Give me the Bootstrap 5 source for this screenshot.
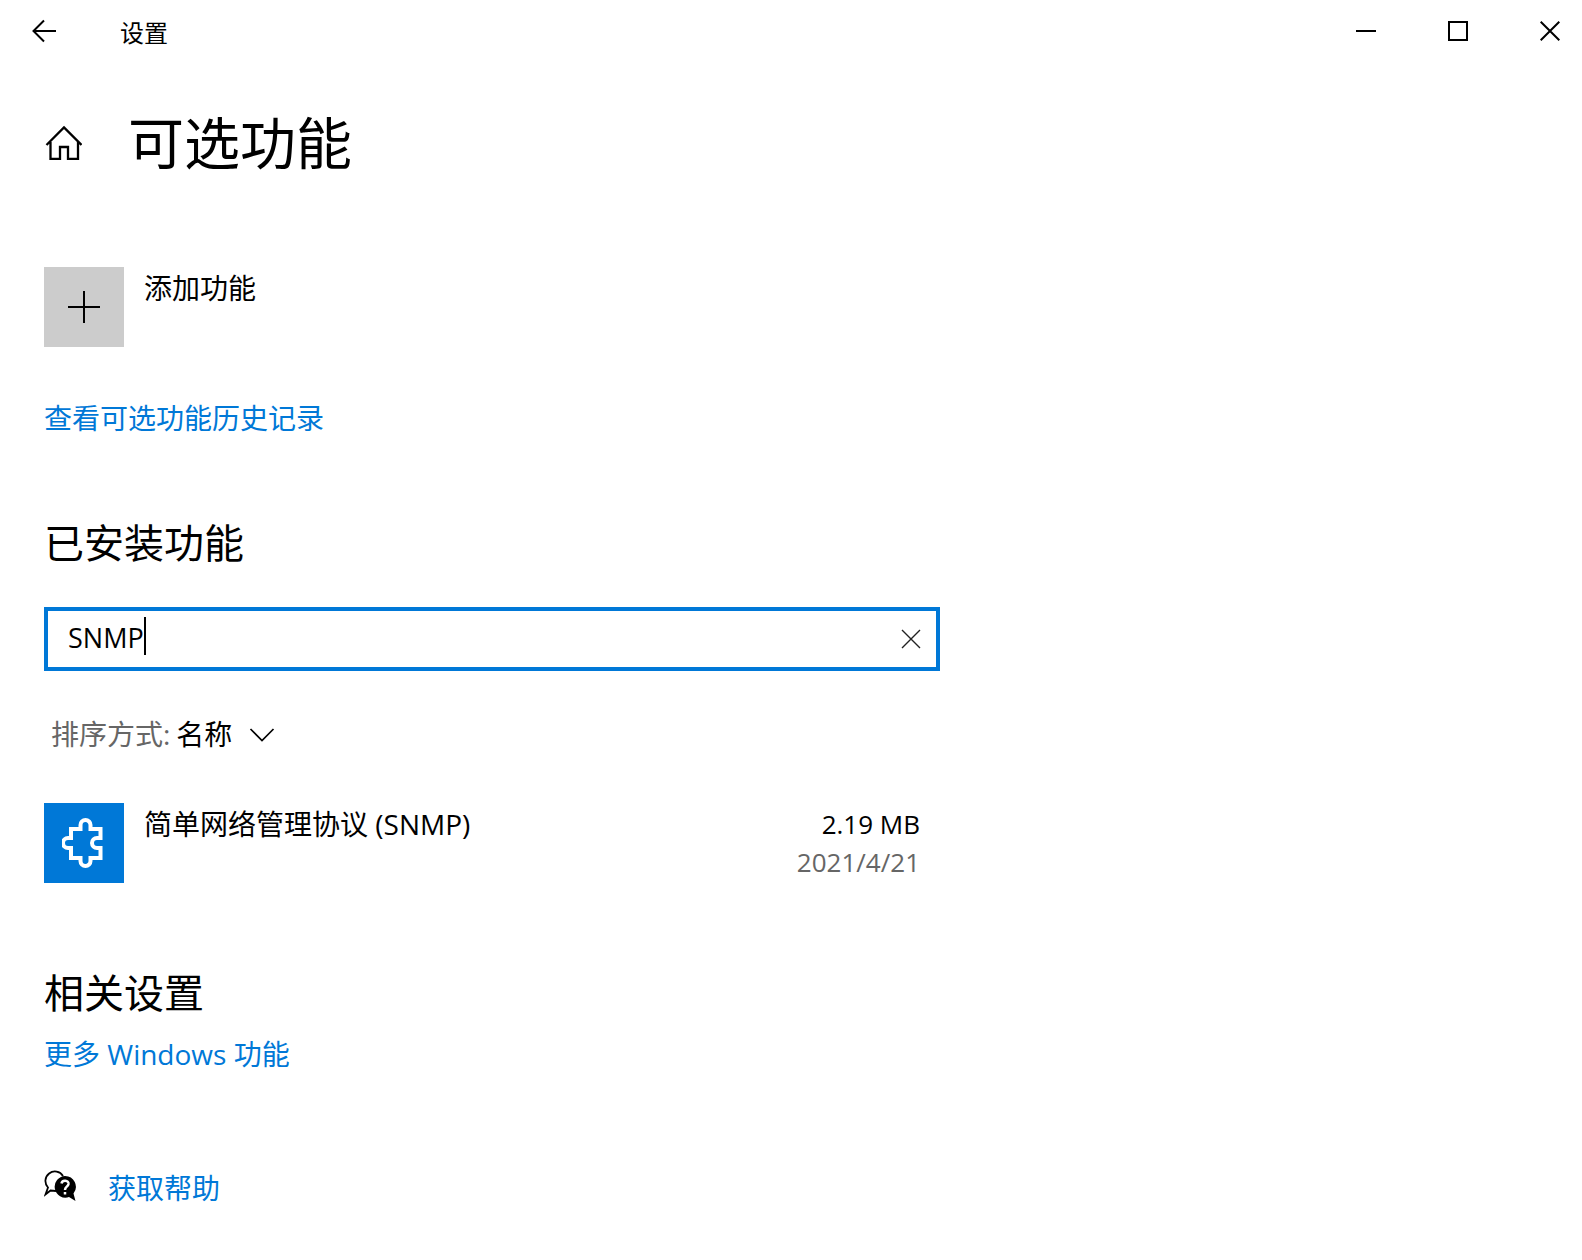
<!DOCTYPE html>
<html lang="zh-CN">
<head>
<meta charset="utf-8">
<meta name="viewport" content="width=device-width, initial-scale=1">
<title>设置</title>
<link rel="stylesheet" href="https://cdn.jsdelivr.net/npm/bootstrap@5.3.0/dist/css/bootstrap.min.css">
<style>
  :root { --accent: #0078d7; --muted: #666; }
  body { font-family: "Open Sans", "Noto Sans CJK SC", sans-serif; font-size: 28px; line-height: 38px; color: #000; background: #fff; }
  svg { display: block; flex: none; fill: none; stroke: #000; stroke-width: 2; }
  a { color: var(--accent); text-decoration: none; }
  a:hover { text-decoration: underline; }
  .plain-btn { background: none; border: 0; padding: 0; color: inherit; display: flex; align-items: center; justify-content: center; text-align: left; }
  .title-bar { height: 62px; padding-left: 32px; }
  .app-name { font-size: 24px; margin-left: 64px; padding-top: 3px; }
  .window-controls { gap: 28px; }
  .window-controls .plain-btn { width: 64px; height: 62px; }
  .page { padding: 44px 44px 50px; }
  .page-head { gap: 46px; margin-bottom: 89px; }
  .page-title { font-size: 56px; line-height: 72px; font-weight: 400; margin: 0; }
  .section-title { font-size: 40px; line-height: 56px; font-weight: 400; margin: 0; }
  .column { max-width: 896px; }
  .tile { width: 80px; height: 80px; flex: none; display: flex; align-items: center; justify-content: center; background: #ccc; }
  .tile-accent { background: var(--accent); }
  .tile-accent svg { stroke: #fff; stroke-width: 4; }
  .tile-row { gap: 20px; width: 100%; }
  .tile-text { padding-top: 2px; }
  .history { margin: 52px 0 78px; }
  .search-box { border: 4px solid var(--accent); height: 64px; margin-top: 36px; }
  .search-box input { font-size: 27px; line-height: 38px; padding: 8px 0 10px 20px; border: 0; border-radius: 0; color: #000; caret-color: transparent; }
  .search-box input:focus { box-shadow: none; }
  .caret-bar { position: absolute; left: 96px; top: 6px; width: 2px; height: 38px; background: #000; }
  .clear-btn { width: 54px; }
  .sort-row { margin: 44px 0 50px; padding-left: 7px; gap: 6px; }
  .muted-text { color: var(--muted); }
  .sort-row select { appearance: none; border: 0; background: none; padding: 0 42px 0 0; color: #000; height: 38px; }
  .sort-row svg { position: absolute; right: 0; top: 12px; pointer-events: none; }
  .feature-meta { font-size: 26px; padding-right: 20px; }
  .related { margin: 82px 0 14px; }
  .help { margin-top: 96px; gap: 32px; }
</style>
<script src="https://cdn.jsdelivr.net/npm/bootstrap@5.3.0/dist/js/bootstrap.bundle.min.js"></script>
</head>
<body>
<header class="title-bar d-flex align-items-center">
  <button class="plain-btn" type="button" aria-label="返回">
    <svg width="24" height="24" viewBox="0 0 24 24"><path d="M24 12H2M12 1.500L1.500 12L12 22.500"/></svg>
  </button>
  <span class="app-name">设置</span>
  <div class="window-controls d-flex ms-auto">
    <button class="plain-btn" type="button" aria-label="最小化"><svg width="20" height="20" viewBox="0 0 20 20"><path d="M0 10H20"/></svg></button>
    <button class="plain-btn" type="button" aria-label="最大化"><svg width="20" height="20" viewBox="0 0 20 20"><path d="M1 1H19V19H1Z"/></svg></button>
    <button class="plain-btn" type="button" aria-label="关闭"><svg width="20" height="20" viewBox="0 0 20 20"><path d="M.7.7L19.300 19.300M19.300.7L.7 19.300"/></svg></button>
  </div>
</header>

<main class="page">
  <div class="page-head d-flex align-items-center">
    <a href="#" aria-label="主页"><svg width="38" height="36" viewBox="0 0 38 36"><path stroke-width="2.300" d="M2.500 21L20 3.500L37.500 21M6.500 18V35H16V23H24V35H34V18"/></svg></a>
    <h1 class="page-title">可选功能</h1>
  </div>

  <div class="column">
    <button class="plain-btn tile-row align-items-start justify-content-start" type="button">
      <span class="tile"><svg width="32" height="32" viewBox="0 0 32 32"><path d="M0 16H32M16 0V32"/></svg></span>
      <span class="tile-text">添加功能</span>
    </button>

    <div class="history"><a href="#">查看可选功能历史记录</a></div>

    <h2 class="section-title">已安装功能</h2>
    <div class="search-box d-flex position-relative">
      <input class="form-control shadow-none" type="text" value="SNMP" aria-label="搜索已安装的可选功能">
      <span class="caret-bar"></span>
      <button class="plain-btn clear-btn" type="button" aria-label="清除"><svg width="20" height="20" viewBox="0 0 20 20"><path stroke="#222" stroke-width="1.400" d="M1 1L19 19M19 1L1 19"/></svg></button>
    </div>

    <div class="sort-row d-flex">
      <label class="muted-text" for="sort">排序方式:</label>
      <div class="position-relative">
        <select id="sort"><option>名称</option></select>
        <svg width="26" height="16" viewBox="0 0 26 16"><path stroke-width="1.700" d="M1.500 2L13 13.500L24.500 2"/></svg>
      </div>
    </div>

    <div class="tile-row d-flex">
      <span class="tile tile-accent">
        <svg width="44" height="52" viewBox="0 0 44 52"><path d="M9 12H18.500V8A5 5 0 0 1 28.500 8V12H38.500V21H35A5 5 0 0 0 35 31H38.500V41H28.500V44A5 5 0 0 1 18.500 44V41H9V31H6A5 5 0 0 1 6 21H9Z"/></svg>
      </span>
      <span class="tile-text">简单网络管理协议 (SNMP)</span>
      <div class="tile-text feature-meta ms-auto text-end">
        <div>2.19 MB</div>
        <div class="muted-text">2021/4/21</div>
      </div>
    </div>

    <h2 class="section-title related">相关设置</h2>
    <a href="#">更多 Windows 功能</a>

    <div class="help d-flex">
      <svg width="32" height="34" viewBox="0 -1 32 34">
        <path stroke-width="1.800" d="M12 21L6.500 20.500L1.500 24.500L4 17.500A9.500 9.500 0 1 1 19 6"/>
        <path fill="#000" stroke="none" d="M21 6A10.800 10.800 0 1 0 25 27L31.500 31L29.500 23.500A10.800 10.800 0 0 0 21 6Z"/>
        <path stroke="#fff" stroke-width="2.500" d="M17.500 13.500C18 9.500 25 10 24.500 14C24 17 21 16.500 21 20M21 22V24.500"/>
      </svg>
      <a href="#">获取帮助</a>
    </div>
  </div>
</main>
</body>
</html>
